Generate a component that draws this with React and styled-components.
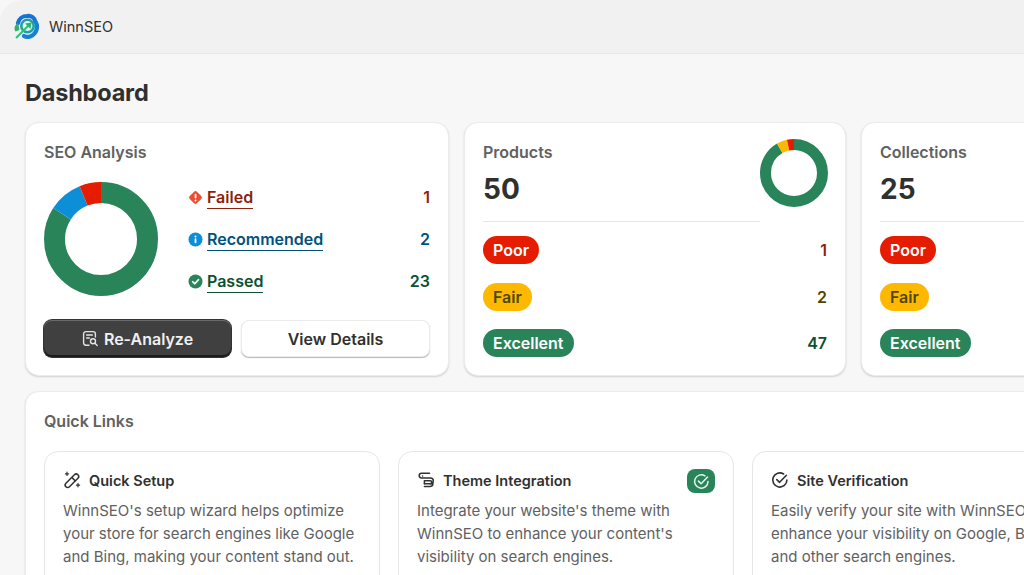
import React from "react";
import styled, { createGlobalStyle } from "styled-components";

const GlobalStyle = createGlobalStyle`
  html, body {
    margin: 0;
    width: 1024px;
    height: 575px;
    overflow: hidden;
    background: #f7f7f7;
    font-family: Inter, "Liberation Sans", sans-serif;
    color: #303030;
  }
  * { box-sizing: border-box; }
`;

const GREEN = "#29845a";
const RED = "#e51c00";
const BLUE = "#0d8fd8";
const YELLOW = "#ffb800";

const Donut = ({ size, thickness, segments }) => {
  const r = (size - thickness) / 2;
  let offset = 0;
  return (
    <svg width={size} height={size} viewBox={`0 0 ${size} ${size}`} style={{ display: "block", flexShrink: 0 }}>
      <g transform={`rotate(-90 ${size / 2} ${size / 2})`}>
        {segments.map((seg) => {
          const el = (
            <circle
              key={seg.color}
              cx={size / 2}
              cy={size / 2}
              r={r}
              fill="none"
              stroke={seg.color}
              strokeWidth={thickness}
              pathLength={360}
              strokeDasharray={`${seg.deg} ${360 - seg.deg}`}
              strokeDashoffset={-offset}
            />
          );
          offset += seg.deg;
          return el;
        })}
      </g>
    </svg>
  );
};

const Logo = () => (
  <svg width="28" height="28" viewBox="0 0 28 28">
    <path d="M6 10 A9 9 0 0 1 15 3 C19 2 23 5 23.5 9" fill="none" stroke="#1572d8" strokeWidth="4.2" strokeLinecap="round" />
    <path d="M23.5 9 C26.5 13 25 21 18 23.5 C15.5 24.3 13.5 24 12 23" fill="none" stroke="#1b7fd6" strokeWidth="4.2" strokeLinecap="round" />
    <path d="M6 10 C2.5 12 1.5 16 3.5 18.5 L7.5 17 Z" fill="#2fb36b" />
    <circle cx="15.5" cy="13" r="6.2" fill="none" stroke="#19a3a8" strokeWidth="2.6" />
    <path d="M4 25 L16 13" stroke="#2fc07f" strokeWidth="2" />
    <path d="M13 10.5 L19.5 9.5 L18.5 16 Z" fill="#22b573" />
  </svg>
);

const FailedIcon = () => (
  <svg width="15" height="15" viewBox="0 0 15 15">
    <rect x="2.4" y="2.4" width="10.2" height="10.2" rx="2" fill="#ef4d2f" transform="rotate(45 7.5 7.5)" />
    <rect x="6.7" y="3.8" width="1.7" height="4.8" rx="0.8" fill="#fff" />
    <circle cx="7.5" cy="10.6" r="1" fill="#fff" />
  </svg>
);

const InfoIcon = () => (
  <svg width="15" height="15" viewBox="0 0 15 15">
    <circle cx="7.5" cy="7.5" r="7" fill={BLUE} />
    <circle cx="7.5" cy="4.4" r="1" fill="#fff" />
    <rect x="6.6" y="6.3" width="1.8" height="5" rx="0.8" fill="#fff" />
  </svg>
);

const PassedIcon = () => (
  <svg width="15" height="15" viewBox="0 0 15 15">
    <circle cx="7.5" cy="7.5" r="7" fill={GREEN} />
    <path d="M4.6 7.7 L6.8 9.8 L10.5 5.6" fill="none" stroke="#fff" strokeWidth="1.6" strokeLinecap="round" strokeLinejoin="round" />
  </svg>
);

const ReportSearchIcon = () => (
  <svg width="17" height="17" viewBox="0 0 17 17" fill="none" stroke="#e3e3e3" strokeWidth="1.4" strokeLinecap="round" strokeLinejoin="round">
    <path d="M7 15.2 H4 A2.4 2.4 0 0 1 1.6 12.8 V4 A2.4 2.4 0 0 1 4 1.6 H11 A2.4 2.4 0 0 1 13.4 4 V7" />
    <path d="M4.6 5 H10.4 M4.6 8 H7.4" />
    <circle cx="11" cy="11.2" r="2.5" />
    <path d="M13 13.2 L15.2 15.4" />
  </svg>
);

const WandIcon = () => (
  <svg width="18" height="18" viewBox="0 0 18 18" fill="none" stroke="#303030" strokeWidth="1.5" strokeLinecap="round" strokeLinejoin="round">
    <rect x="0.4" y="7.2" width="17" height="5" rx="2.5" transform="rotate(-45 9 9.7)" />
    <path d="M9.3 6.9 L12.1 9.7" />
    <path d="M4 1.2 V4.4 M2.4 2.8 H5.6" strokeWidth="1.2" />
    <path d="M15 12.6 V15.8 M13.4 14.2 H16.6" strokeWidth="1.2" />
  </svg>
);

const ThemeIcon = () => (
  <svg width="18" height="18" viewBox="0 0 18 18" fill="none" stroke="#303030" strokeWidth="1.5" strokeLinecap="round" strokeLinejoin="round">
    <path d="M12.5 2.2 H4.6 A2.4 2.4 0 0 0 4.6 7 L13.4 7 A2.9 2.9 0 0 1 13.4 12.8 H7.4" />
    <path d="M5.6 5 V5 M7.4 9.8 H13.2 A1.2 1.2 0 0 1 13.2 12.8 M7.4 9.8 V12.8 M7.4 15.4 H13.4 A2.6 2.6 0 0 0 15.9 12.8" />
  </svg>
);

const VerifyIcon = ({ color = "#303030", size = 18 }) => (
  <svg width={size} height={size} viewBox="0 0 18 18" fill="none" stroke={color} strokeWidth="1.6" strokeLinecap="round" strokeLinejoin="round">
    <path d="M15.9 9 A7.1 7.1 0 1 1 12.6 3" />
    <path d="M5.8 8.6 L8.6 11.3 L15.4 4.3" />
  </svg>
);

const Page = styled.div`
  width: 1024px;
  height: 575px;
  overflow: hidden;
`;

const TopBar = styled.header`
  height: 54px;
  display: flex;
  align-items: center;
  gap: 9px;
  padding: 0 0 0 12px;
  background: #f1f1f1;
  border-bottom: 1px solid #e8e8e8;
  border-top-left-radius: 22px;
`;

const Brand = styled.span`
  font-size: 14.5px;
  color: #303030;
`;

const Content = styled.main`
  padding: 24px 0 0 25px;
  width: 1300px;
`;

const PageTitle = styled.h1`
  margin: 0 0 14px;
  font-size: 23.5px;
  line-height: 30px;
  font-weight: 700;
  letter-spacing: -0.2px;
  color: #303030;
`;

const CardRow = styled.div`
  display: flex;
  gap: 15px;
  margin-bottom: 15px;
`;

const Card = styled.section`
  background: #fff;
  border-radius: 14px;
  border: 1px solid #ececec;
  box-shadow: 0 1px 2px rgba(0, 0, 0, 0.16);
  padding: 18px;
  width: ${(p) => p.$width}px;
  height: ${(p) => p.$height}px;
`;

const CardTitle = styled.h2`
  margin: 0;
  font-size: 16px;
  line-height: 22px;
  font-weight: 600;
  color: #616161;
`;

const AnalysisBody = styled.div`
  display: flex;
  align-items: center;
  margin: 19px 0 24px;
  height: 114px;
`;

const Legend = styled.div`
  flex: 1;
  margin-left: 30px;
  display: flex;
  flex-direction: column;
  gap: 20px;
`;

const LegendRow = styled.div`
  display: flex;
  align-items: center;
  height: 22px;
  gap: 4px;
  color: ${(p) => p.$color};
  font-size: 16px;
  font-weight: 600;
`;

const LegendLink = styled.a`
  flex: 1;
  & > span {
    border-bottom: 1.5px solid ${(p) => p.$color};
    padding-bottom: 1px;
  }
`;

const Actions = styled.div`
  display: flex;
  gap: 10px;
`;

const PrimaryButton = styled.button`
  flex: 1;
  height: 37px;
  display: flex;
  align-items: center;
  justify-content: center;
  gap: 5px;
  border: none;
  border-radius: 8px;
  background: #404040;
  box-shadow: inset 0 1px 0 #6a6a6a, inset 0 -2px 0 #1c1c1c, 0 0 0 1px #333;
  color: #f0f0f0;
  font: 600 16px Inter, "Liberation Sans", sans-serif;
`;

const SecondaryButton = styled.button`
  flex: 1;
  height: 37px;
  border: 1px solid #ebebeb;
  border-radius: 8px;
  background: #fff;
  box-shadow: 0 1px 1px rgba(0, 0, 0, 0.28);
  color: #303030;
  font: 600 16px Inter, "Liberation Sans", sans-serif;
`;

const StatHead = styled.div`
  display: flex;
  align-items: flex-start;
  margin-bottom: 14px;
`;

const StatLeft = styled.div`
  flex: 1;
  height: 81px;
  border-bottom: 1px solid #e6e6e6;
`;

const StatValue = styled.div`
  margin-top: 9px;
  font-size: 28px;
  line-height: 34px;
  font-weight: 700;
  color: #303030;
`;

const DonutSlot = styled.div`
  margin-right: -1px;
  margin-top: -2px;
`;

const StatRows = styled.div`
  display: flex;
  flex-direction: column;
  gap: 18.5px;
`;

const StatRow = styled.div`
  display: flex;
  align-items: center;
  justify-content: space-between;
  height: 28px;
`;

const Badge = styled.span`
  display: inline-flex;
  align-items: center;
  height: 28px;
  padding: 0 10px;
  border-radius: 14px;
  font-size: 16px;
  font-weight: 600;
  background: ${(p) => p.$bg};
  color: ${(p) => p.$fg};
`;

const Count = styled.span`
  font-size: 16px;
  font-weight: 600;
  color: ${(p) => p.$color};
`;

const LinksCard = styled(Card)`
  height: 260px;
  width: 1300px;
  padding-top: 18px;
`;

const LinksGrid = styled.div`
  display: flex;
  gap: 18px;
  margin-top: 19px;
`;

const LinkCard = styled.article`
  position: relative;
  width: 336px;
  height: 180px;
  border: 1px solid #e6e6e6;
  border-radius: 14px;
  padding: 17px 18px;
`;

const LinkHead = styled.div`
  display: flex;
  align-items: center;
  gap: 8px;
  height: 22px;
  margin-bottom: 8px;
  font-size: 14.5px;
  font-weight: 600;
  color: #303030;
`;

const LinkText = styled.p`
  margin: 0;
  font-size: 15px;
  line-height: 23.2px;
  color: #616161;
  white-space: nowrap;
`;

const DoneBadge = styled.span`
  position: absolute;
  top: 17px;
  right: 18px;
  width: 28px;
  height: 24px;
  border-radius: 8px;
  background: ${GREEN};
  display: flex;
  align-items: center;
  justify-content: center;
`;

const legend = [
  { label: "Failed", count: 1, color: "#8e1f0b", Icon: FailedIcon },
  { label: "Recommended", count: 2, color: "#00527c", Icon: InfoIcon },
  { label: "Passed", count: 23, color: "#0c5132", Icon: PassedIcon },
];

const stats = [
  { label: "Products", total: 50, counts: [1, 2, 47], showDonut: true },
  { label: "Collections", total: 25, counts: [1, 2, 22], showDonut: true },
];

const levels = [
  { label: "Poor", bg: RED, fg: "#fff", color: "#8e1f0b" },
  { label: "Fair", bg: YELLOW, fg: "#4f4700", color: "#4f4700" },
  { label: "Excellent", bg: GREEN, fg: "#fff", color: "#0c5132" },
];

const links = [
  {
    title: "Quick Setup",
    Icon: WandIcon,
    lines: ["WinnSEO's setup wizard helps optimize", "your store for search engines like Google", "and Bing, making your content stand out."],
  },
  {
    title: "Theme Integration",
    Icon: ThemeIcon,
    done: true,
    lines: ["Integrate your website's theme with", "WinnSEO to enhance your content's", "visibility on search engines."],
  },
  {
    title: "Site Verification",
    Icon: VerifyIcon,
    lines: ["Easily verify your site with WinnSEO to", "enhance your visibility on Google, Bing,", "and other search engines."],
  },
];

export default function App() {
  return (
    <Page>
      <GlobalStyle />
      <TopBar>
        <Logo />
        <Brand>WinnSEO</Brand>
      </TopBar>
      <Content>
        <PageTitle>Dashboard</PageTitle>
        <CardRow>
          <Card $width={424} $height={254}>
            <CardTitle>SEO Analysis</CardTitle>
            <AnalysisBody>
              <Donut
                size={114}
                thickness={21}
                segments={[
                  { color: GREEN, deg: 303 },
                  { color: BLUE, deg: 35 },
                  { color: RED, deg: 22 },
                ]}
              />
              <Legend>
                {legend.map(({ label, count, color, Icon }) => (
                  <LegendRow key={label} $color={color}>
                    <Icon />
                    <LegendLink $color={color}>
                      <span>{label}</span>
                    </LegendLink>
                    <span>{count}</span>
                  </LegendRow>
                ))}
              </Legend>
            </AnalysisBody>
            <Actions>
              <PrimaryButton>
                <ReportSearchIcon />
                Re-Analyze
              </PrimaryButton>
              <SecondaryButton>View Details</SecondaryButton>
            </Actions>
          </Card>
          {stats.map((stat) => (
            <Card key={stat.label} $width={382} $height={254}>
              <StatHead>
                <StatLeft>
                  <CardTitle>{stat.label}</CardTitle>
                  <StatValue>{stat.total}</StatValue>
                </StatLeft>
                <DonutSlot>
                  <Donut
                    size={68}
                    thickness={11}
                    segments={[
                      { color: GREEN, deg: 330 },
                      { color: YELLOW, deg: 18 },
                      { color: RED, deg: 12 },
                    ]}
                  />
                </DonutSlot>
              </StatHead>
              <StatRows>
                {levels.map((level, i) => (
                  <StatRow key={level.label}>
                    <Badge $bg={level.bg} $fg={level.fg}>{level.label}</Badge>
                    <Count $color={level.color}>{stat.counts[i]}</Count>
                  </StatRow>
                ))}
              </StatRows>
            </Card>
          ))}
        </CardRow>
        <LinksCard>
          <CardTitle>Quick Links</CardTitle>
          <LinksGrid>
            {links.map(({ title, Icon, lines, done }) => (
              <LinkCard key={title}>
                <LinkHead>
                  <Icon />
                  {title}
                </LinkHead>
                {done && (
                  <DoneBadge>
                    <VerifyIcon color="#e4f5ec" size={17} />
                  </DoneBadge>
                )}
                <LinkText>
                  {lines.map((line) => (
                    <React.Fragment key={line}>
                      {line}
                      <br />
                    </React.Fragment>
                  ))}
                </LinkText>
              </LinkCard>
            ))}
          </LinksGrid>
        </LinksCard>
      </Content>
    </Page>
  );
}
